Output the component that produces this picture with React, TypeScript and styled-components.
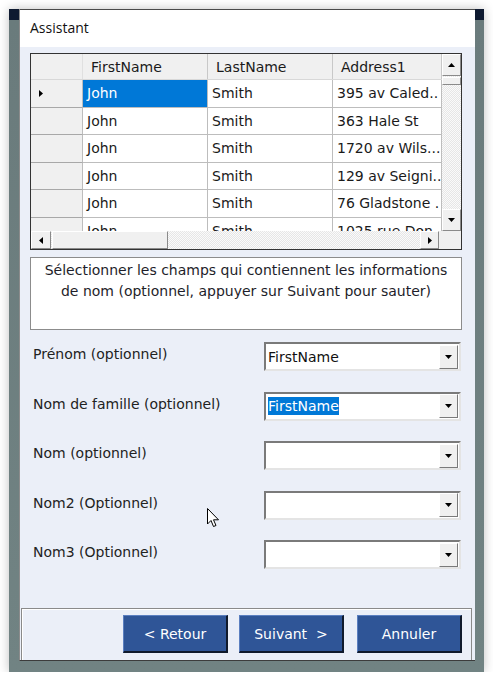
import React from 'react'
import styled, { createGlobalStyle } from 'styled-components'

const GlobalStyle = createGlobalStyle`
  html, body {
    margin: 0;
    padding: 0;
    background: #ffffff;
  }
  * {
    box-sizing: border-box;
  }
`

const UI_FONT = `"DejaVu Sans", "Liberation Sans", sans-serif`

const Desktop = styled.div`
  margin: 9px 0 0 9px;
  width: 475px;
  height: 663px;
  padding: 0 9px 11px 10px;
  background: linear-gradient(to bottom, #0e1a30 0, #0e1a30 11px, #6a7b7c 11px, #718383 100%);
  box-shadow: 0 0 10px rgba(0, 0, 0, 0.25);
`

const Window = styled.div`
  display: flex;
  flex-direction: column;
  width: 100%;
  height: 100%;
  background: #ebeff8;
  border-bottom: 1px solid #3c3c3c;
  border-left: 1px solid #8c8c8c;
`

const TitleBar = styled.div`
  display: flex;
  align-items: center;
  height: 38px;
  padding: 0 0 2px 10px;
  background: #ffffff;
  border-top: 1px solid #4a4a4a;
  font-family: "Open Sans", "Noto Sans", sans-serif;
  font-size: 14px;
  color: #111;
`

const Body = styled.div`
  position: relative;
  display: flex;
  flex-direction: column;
  flex: 1;
  padding: 6px 12px 0 10px;
  font-family: ${UI_FONT};
`

/* ---------- data grid ---------- */

const Grid = styled.div`
  display: grid;
  grid-template-columns: 411px 19px;
  grid-template-rows: 177px 18px;
  width: 432px;
  height: 197px;
  border: 1px solid #333;
  box-shadow: inset 0 0 0 1px #8a8a8a;
  background: #ffffff;
  overflow: hidden;
`

const Sheet = styled.div`
  overflow: hidden;
  font-size: 14px;
  color: #1a1a1a;
`

const Row = styled.div<{ $head?: boolean }>`
  display: grid;
  grid-template-columns: 52px 125px 125px 109px;
  height: ${p => (p.$head ? 26 : 27.5)}px;
  background: ${p => (p.$head ? '#f0f0f0' : '#ffffff')};
  border-bottom: 1px solid ${p => (p.$head ? '#d8d8d8' : '#bdbdbd')};
`

const HeadCell = styled.div`
  display: flex;
  align-items: center;
  padding-left: 8px;
  border-right: 1px solid #c8c8c8;
  white-space: nowrap;
  overflow: hidden;
  &:first-child {
    border-right-color: #e0e0e0;
  }
`

const RowHead = styled.div`
  display: flex;
  align-items: center;
  padding-left: 8px;
  background: #f0f0f0;
  border-right: 1px solid #bdbdbd;
  margin-bottom: -1px;
  border-bottom: 1px solid #a8a8a8;
`

const Cell = styled.div<{ $selected?: boolean }>`
  display: flex;
  align-items: center;
  padding-left: 4px;
  border-right: 1px solid #bdbdbd;
  white-space: nowrap;
  overflow: hidden;
  background: ${p => (p.$selected ? '#0078d7' : 'transparent')};
  color: ${p => (p.$selected ? '#ffffff' : 'inherit')};
`

const Track = styled.div<{ $vertical?: boolean }>`
  display: flex;
  flex-direction: ${p => (p.$vertical ? 'column' : 'row')};
  background-color: #f4f4f4;
  background-image: repeating-conic-gradient(#e6e6e6 0 25%, #fafafa 0 50%);
  background-size: 2px 2px;
`

const ArrowButton = styled.div<{ $w: number; $h: number }>`
  display: flex;
  align-items: center;
  justify-content: center;
  flex: 0 0 auto;
  width: ${p => p.$w}px;
  height: ${p => p.$h}px;
  background: #f0f0f0;
  border: 1px solid #ffffff;
  border-right-color: #8a8a8a;
  border-bottom-color: #8a8a8a;
`

const Thumb = styled.div<{ $w: number; $h: number; $offset: number; $vertical?: boolean }>`
  flex: 0 0 auto;
  width: ${p => p.$w}px;
  height: ${p => p.$h}px;
  margin-${p => (p.$vertical ? 'top' : 'left')}: ${p => p.$offset}px;
  background: #f0f0f0;
  border: 1px solid #ffffff;
  border-right-color: #8a8a8a;
  border-bottom-color: #8a8a8a;
`

const Spacer = styled.div`
  flex: 1;
`

const Corner = styled.div<{ $w?: number }>`
  width: ${p => (p.$w ? `${p.$w}px` : 'auto')};
  background: #f0f0f0;
`

const Tri = ({ dir }: { dir: 'up' | 'down' | 'left' | 'right' }) => {
  const pts = {
    up: '0,4 7,4 3.5,0',
    down: '0,0 7,0 3.5,4',
    left: '4,0 4,7 0,3.5',
    right: '0,0 0,7 4,3.5',
  }[dir]
  const vert = dir === 'up' || dir === 'down'
  return (
    <svg width={vert ? 7 : 4} height={vert ? 4 : 7} viewBox={vert ? '0 0 7 4' : '0 0 4 7'}>
      <polygon points={pts} fill="#000" />
    </svg>
  )
}

/* ---------- info text ---------- */

const Info = styled.div`
  margin-top: 7px;
  height: 73px;
  width: 432px;
  padding-top: 2px;
  background: #ffffff;
  border: 1px solid #8c8c8c;
  text-align: center;
  font-size: 14px;
  line-height: 21px;
  color: #1e1e2a;
`

/* ---------- fields ---------- */

const Fields = styled.div`
  display: flex;
  flex-direction: column;
  gap: 20.5px;
  margin-top: 12px;
  padding-left: 3px;
`

const FieldRow = styled.div`
  display: flex;
  align-items: center;
  height: 29px;
`

const Label = styled.div`
  width: 231px;
  margin-top: -5px;
  font-size: 14px;
  color: #222;
`

const Combo = styled.div`
  display: flex;
  align-items: center;
  width: 197px;
  height: 29px;
  padding: 0 1px 0 2px;
  background: #ffffff;
  border: 2px solid #7a7a7a;
  border-right-color: #e4e4e4;
  border-bottom-color: #e4e4e4;
  font-size: 14px;
  color: #111;
`

const ComboText = styled.span<{ $highlight?: boolean }>`
  flex: 1;
  span {
    padding: 1px 0;
    background: ${p => (p.$highlight ? '#0078d7' : 'transparent')};
    color: ${p => (p.$highlight ? '#fff' : 'inherit')};
  }
`

const DropButton = styled.div`
  display: flex;
  align-items: center;
  justify-content: center;
  width: 19px;
  height: 24px;
  background: #f0f0f0;
  border: 1px solid #ffffff;
  border-right-color: #7a7a7a;
  border-bottom-color: #7a7a7a;
`

/* ---------- footer ---------- */

const Footer = styled.div`
  display: flex;
  justify-content: flex-end;
  margin: auto -9px 0 -9px;
  height: 52px;
  padding: 6px 9px 0 0;
  border: 1px solid #8a8a8a;
  border-bottom: none;
  box-shadow: inset 1px 1px 0 #ffffff;
`

const Button = styled.div<{ $gap?: number }>`
  display: flex;
  align-items: center;
  justify-content: center;
  width: 105px;
  height: 38px;
  margin-left: ${p => p.$gap ?? 0}px;
  background: #2f5597;
  border: 1px solid #5b7fc0;
  border-right: 2px solid #101a2c;
  border-bottom: 2px solid #101a2c;
  color: #ffffff;
  font-size: 14px;
`

const Cursor = styled.svg`
  position: absolute;
  left: 187px;
  top: 461px;
`

const rows = [
  ['John', 'Smith', '395 av Caled..'],
  ['John', 'Smith', '363 Hale St'],
  ['John', 'Smith', '1720 av Wils...'],
  ['John', 'Smith', '129 av Seigni..'],
  ['John', 'Smith', '76 Gladstone .'],
  ['John', 'Smith', '1025 rue Don..'],
]

const fields = [
  { label: 'Prénom (optionnel)', value: 'FirstName' },
  { label: 'Nom de famille (optionnel)', value: 'FirstName', highlight: true },
  { label: 'Nom (optionnel)', value: '' },
  { label: 'Nom2 (Optionnel)', value: '' },
  { label: 'Nom3 (Optionnel)', value: '' },
]

export default function App() {
  return (
    <>
      <GlobalStyle />
      <Desktop>
        <Window>
          <TitleBar>Assistant</TitleBar>
          <Body>
            <Grid>
              <Sheet>
                <Row $head>
                  <HeadCell />
                  <HeadCell>FirstName</HeadCell>
                  <HeadCell>LastName</HeadCell>
                  <HeadCell>Address1</HeadCell>
                </Row>
                {rows.map((r, i) => (
                  <Row key={i}>
                    <RowHead>{i === 0 && <Tri dir="right" />}</RowHead>
                    <Cell $selected={i === 0}>{r[0]}</Cell>
                    <Cell>{r[1]}</Cell>
                    <Cell>{r[2]}</Cell>
                  </Row>
                ))}
              </Sheet>
              <Track $vertical>
                <ArrowButton $w={19} $h={22}>
                  <Tri dir="up" />
                </ArrowButton>
                <Thumb $vertical $w={19} $h={8} $offset={1} />
                <Spacer />
                <ArrowButton $w={19} $h={22}>
                  <Tri dir="down" />
                </ArrowButton>
              </Track>
              <Track>
                <ArrowButton $w={20} $h={18}>
                  <Tri dir="left" />
                </ArrowButton>
                <Thumb $w={116} $h={18} $offset={1} />
                <Spacer />
                <ArrowButton $w={19} $h={18}>
                  <Tri dir="right" />
                </ArrowButton>
                <Corner $w={3} />
              </Track>
              <Corner />
            </Grid>

            <Info>
              Sélectionner les champs qui contiennent les informations
              <br />
              de nom (optionnel, appuyer sur Suivant pour sauter)
            </Info>

            <Fields>
              {fields.map(f => (
                <FieldRow key={f.label}>
                  <Label>{f.label}</Label>
                  <Combo>
                    <ComboText $highlight={f.highlight}>
                      <span>{f.value}</span>
                    </ComboText>
                    <DropButton>
                      <Tri dir="down" />
                    </DropButton>
                  </Combo>
                </FieldRow>
              ))}
            </Fields>

            <Cursor width="13" height="20" viewBox="0 0 13 20">
              <path d="M0.5 0.5 L0.5 16 L4 12.5 L6.5 18.5 L9 17.5 L6.5 11.8 L11.5 11.8 Z" fill="#fff" stroke="#000" strokeWidth="1" />
            </Cursor>

            <Footer>
              <Button>&lt; Retour</Button>
              <Button $gap={11}>Suivant &nbsp;&gt;</Button>
              <Button $gap={13}>Annuler</Button>
            </Footer>
          </Body>
        </Window>
      </Desktop>
    </>
  )
}
